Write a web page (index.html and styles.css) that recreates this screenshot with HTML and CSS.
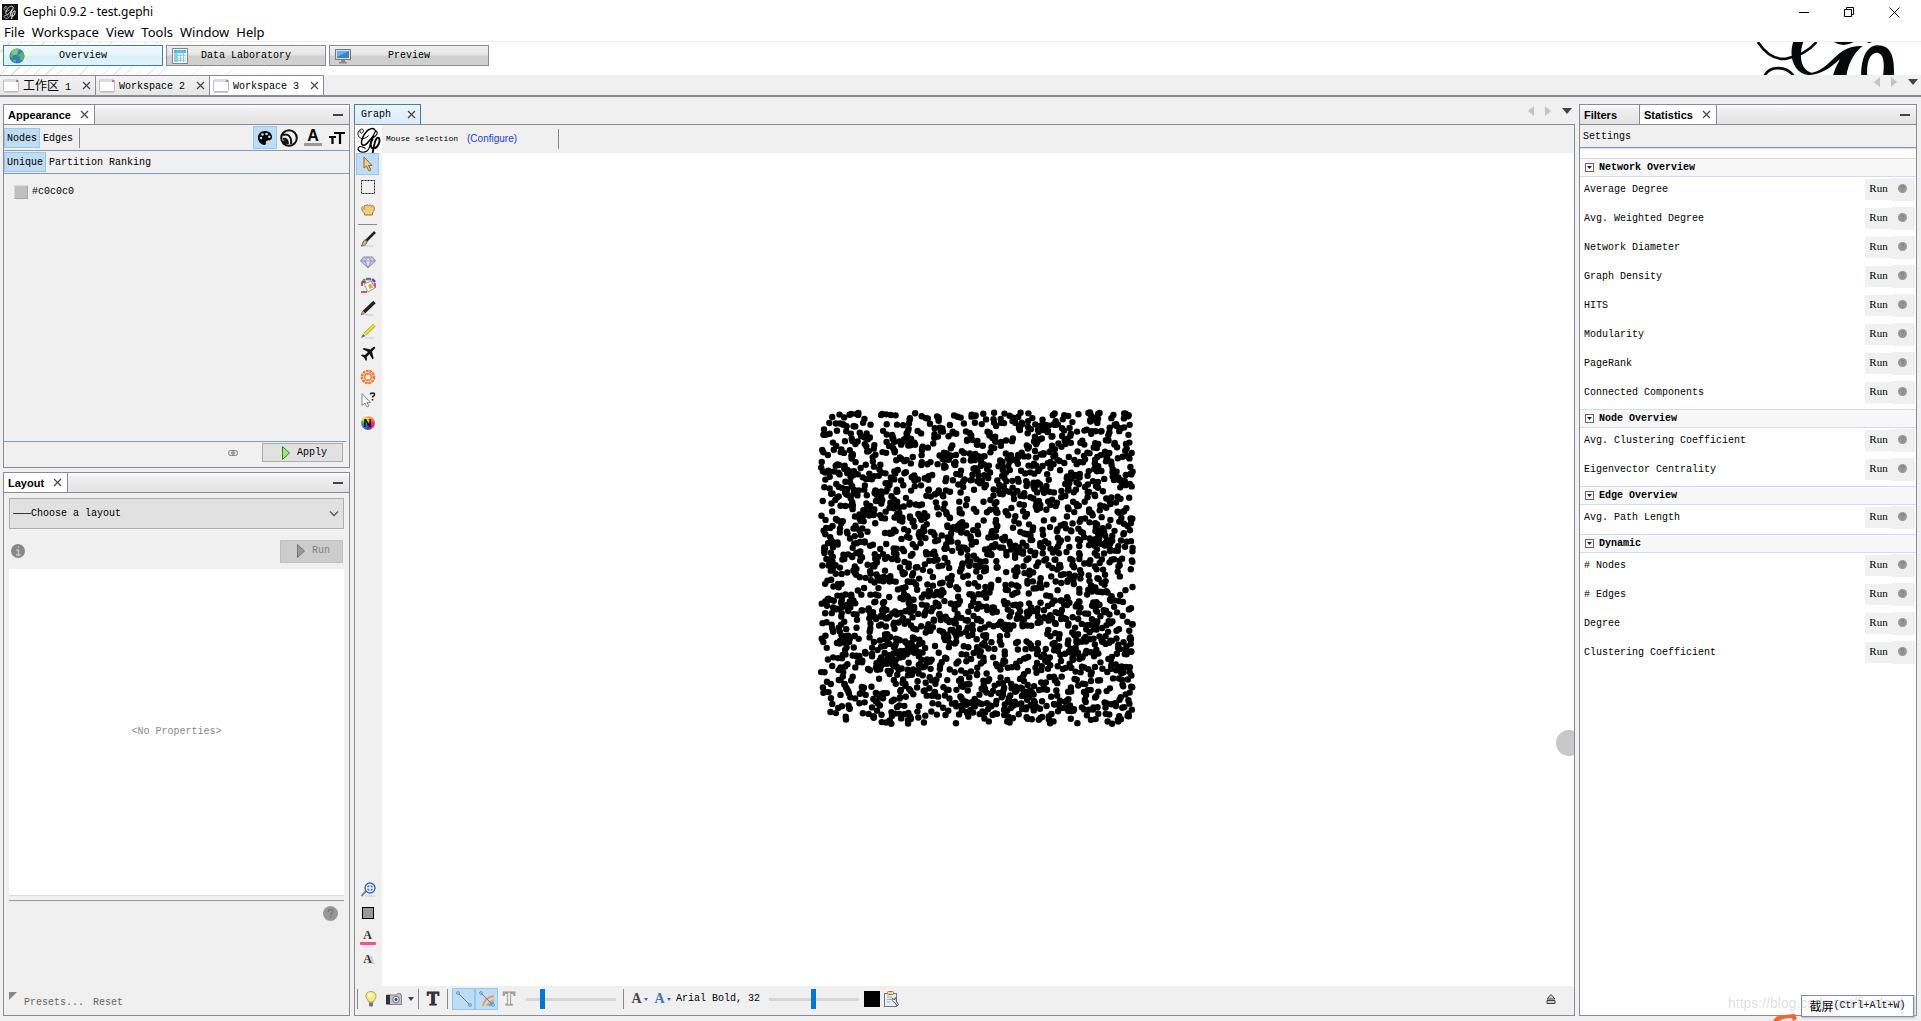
FILE: index.html
```html
<!DOCTYPE html>
<html lang="en">
<head>
<meta charset="utf-8">
<title>Gephi 0.9.2 - test.gephi</title>
<link rel="stylesheet" href="styles.css">
</head>
<body>
<svg class="defs" aria-hidden="true">
  <symbol id="close" viewBox="0 0 9 9"><path d="M1 1l7 7M8 1L1 8" stroke="#444" stroke-width="1.2" fill="none"/></symbol>
  <symbol id="help" viewBox="0 0 14 14"><circle cx="7" cy="7" r="7" fill="#989898"/><path d="M4.8 5.4C4.8 2.6 9.2 2.6 9.2 5.2 9.2 6.8 7 6.8 7 8.6M7 9.8v1.4" fill="none" stroke="#777" stroke-width="1.3"/></symbol>
  <symbol id="info" viewBox="0 0 14 14"><circle cx="7" cy="7" r="7" fill="#888"/><path d="M5.5 6H7.5V11M5 11H9.5M6.8 3h1" fill="none" stroke="#ccc" stroke-width="1.4"/></symbol>
  <symbol id="fold" viewBox="0 0 9 9"><rect x=".5" y=".5" width="8" height="8" fill="#fff" stroke="#666"/><path d="M2 3h5L4.500 6z" fill="#222"/></symbol>
  <symbol id="sheet" viewBox="0 0 16 14"><rect x=".5" y="1" width="15" height="11.500" rx="1" fill="#fdfdfd" stroke="#bbb"/><path d="M1 2h14" stroke="#ddd" stroke-width="2"/><path d="M13 1h2v2h-2z" fill="#c77"/><path d="M1 13.500h14" stroke="#ccc"/></symbol>
  <symbol id="script-g" viewBox="0 0 26 26"><g fill="none" stroke="currentColor" stroke-linecap="round"><path d="M12 9C6 15 1 10 2 6 3 2 8 1 7 5 6 8 3 6 4 4" stroke-width=".9"/><path d="M18 3C15 0 9 4 6 12 4 18 7 20 11 16L17 9" stroke-width="1.500"/><path d="M19 4C16 9 14 15 13 20 11 26 4 26 2 22 2 18 6 19 9 21" stroke-width="1.100"/><path d="M19 4c3 2 1 5-3 7" stroke-width="1"/><path d="M16 12c-3 5-2 9 1 9 4 0 7-7 5-10-3-2-5 8-6 15" stroke-width="1.800"/></g></symbol>
  <symbol id="left" viewBox="0 0 6 10"><path d="M6 0v10L0 5z" fill="#c4c4c4"/></symbol>
  <symbol id="right" viewBox="0 0 6 10"><path d="M0 0v10L6 5z" fill="#c4c4c4"/></symbol>
  <symbol id="down" viewBox="0 0 10 6"><path d="M0 0h10L5 6z" fill="#444"/></symbol>
</svg>

<header class="titlebar">
  <svg class="app-icon" viewBox="0 0 16 16"><rect width="16" height="16" fill="#111"/><svg x="1" y="1" width="14" height="14" color="#fff"><use href="#script-g"/></svg></svg>
  <h1>Gephi 0.9.2 - test.gephi</h1>
  <div class="window-buttons">
    <button aria-label="Minimize"><svg width="11" height="11"><path d="M0 5.500h10" stroke="#000"/></svg></button>
    <button aria-label="Restore"><svg width="11" height="11" fill="none" stroke="#000"><path d="M.5 2.500h7v7h-7zM2.500 2.500v-2h7v7h-2"/></svg></button>
    <button aria-label="Close"><svg width="11" height="11"><path d="M.5.500l10 10M10.500.500l-10 10" stroke="#000"/></svg></button>
  </div>
</header>
<nav class="menubar"><button>File</button><button>Workspace</button><button>View</button><button>Tools</button><button>Window</button><button>Help</button></nav>

<div class="perspectives">
  <button class="perspective active">
    <svg width="16" height="16" viewBox="0 0 16 16"><circle cx="8" cy="8" r="7.500" fill="#2b7fc4"/><path d="M2 4C4 0 10 0 11 2L9 4 8 7 5 7 3 10 1 8zM10 6l4-2 1.500 4-2 5-2-1-.5-3-2-1zM4 11l3 1 0 3-3-2z" fill="#63b45a"/><circle cx="6" cy="4" r="3" fill="#fff" opacity=".25"/></svg><span>Overview</span></button>
  <button class="perspective">
    <svg width="16" height="16" viewBox="0 0 16 16"><rect x=".5" y=".5" width="15" height="15" fill="#fff" stroke="#888"/><path d="M2 2h12v3H2z" fill="#50bfe2"/><path d="M2 5h3v9H2z" fill="#8ad6ec"/><path d="M2 7.500h12M2 10h12M2 12.500h12M5.500 3v11M8.500 3v11M11.500 3v11" stroke="#7cc6e2" stroke-width=".8"/></svg><span>Data Laboratory</span></button>
  <button class="perspective">
    <svg width="16" height="16" viewBox="0 0 16 16"><rect x=".5" y="1.500" width="15" height="10" fill="#ddd" stroke="#777"/><path d="M2 3h12v7H2z" fill="#2d87cb"/><path d="M2 3h12L2 9z" fill="#66b1e5"/><path d="M6 12h4v2h2v1.500H4V14h2z" fill="#888"/></svg><span>Preview</span></button>
  <svg class="banner" viewBox="760 126 440 99" aria-hidden="true"><g fill="#050909"><path d="M774 126C800 165 830 180 860 176 900 168 930 150 950 126M795 226C810 196 860 198 880 226" fill="none" stroke="#050909" stroke-width="8"/><path d="M880 126H910C895 170 905 212 935 218 975 212 1000 170 1030 152 1050 140 1070 137 1088 138 1060 160 1045 195 1040 225H1000C1005 205 1015 190 1020 178 990 205 960 226 925 225 885 220 865 175 880 126zM1084 225C1085 150 1115 136 1135 136 1170 136 1185 165 1182 225H1150C1155 180 1150 160 1130 158 1112 160 1100 180 1102 225zM1002 126Q1030 144 1062 126zM1100 126h16l-8 4z"/></g></svg>
</div>

<div class="workspaces">
  <div class="workspace"><svg width="16" height="14"><use href="#sheet"/></svg><span><span class="cjk">工作区</span> 1</span><button aria-label="Close workspace"><svg><use href="#close"/></svg></button></div>
  <div class="workspace"><svg width="16" height="14"><use href="#sheet"/></svg><span>Workspace 2</span><button aria-label="Close workspace"><svg><use href="#close"/></svg></button></div>
  <div class="workspace active"><svg width="16" height="14"><use href="#sheet"/></svg><span>Workspace 3</span><button aria-label="Close workspace"><svg><use href="#close"/></svg></button></div>
  <div class="scrollers"><button aria-label="Previous"><svg width="6" height="10"><use href="#left"/></svg></button><button aria-label="Next"><svg width="6" height="10"><use href="#right"/></svg></button><button aria-label="List"><svg width="10" height="6"><use href="#down"/></svg></button></div>
</div>

<main>
  <div class="sidebar">
    <section class="panel appearance">
      <div class="tabs"><div class="tab active"><h2>Appearance</h2><button aria-label="Close"><svg><use href="#close"/></svg></button></div><button class="minimize" aria-label="Minimize"></button></div>
      <div class="bar elements">
        <button class="toggle on">Nodes</button><button class="toggle">Edges</button><i class="vsep"></i>
        <div class="aspects">
          <button class="aspect on" aria-label="Color"><svg width="16" height="16" viewBox="0 0 16 16"><path d="M8 1C3 1 1 4.500 1 7.500 1 12 4 14.500 7.500 15 10 15 8 12 9.500 11 11 10 15 11 15 7 15 3 11.500 1 8 1z" fill="#000"/><g fill="#bfdcf3"><circle cx="4" cy="8" r="1.300"/><circle cx="5.500" cy="4.500" r="1.300"/><circle cx="9.500" cy="4" r="1.300"/><circle cx="12.300" cy="6.800" r="1.300"/></g></svg></button>
          <button class="aspect" aria-label="Size"><svg width="18" height="18" viewBox="0 0 18 18" fill="none" stroke="#111" stroke-width="2"><circle cx="9" cy="9" r="7.800"/><path d="M3 6c5-2 9 2 8 9M3 10c3-1 5 1 5 5"/><circle cx="5" cy="13.500" r="1.500" fill="#111"/></svg></button>
          <button class="aspect letter" aria-label="Label color">A</button>
          <button class="aspect" aria-label="Label size"><svg width="16" height="14" viewBox="0 0 16 14"><path d="M5 2h11M11 2v11M0 6h7M3.500 6v7" stroke="#000" stroke-width="2.200" fill="none"/></svg></button>
        </div>
      </div>
      <div class="bar modes"><button class="toggle on">Unique</button><button class="toggle">Partition</button><button class="toggle">Ranking</button></div>
      <label class="color"><button class="swatch" aria-label="Pick color"></button>#c0c0c0</label>
      <div class="bar apply-row">
        <button class="link" aria-label="Link"><svg width="10" height="6" viewBox="0 0 10 6"><rect x=".5" y=".5" width="9" height="5" rx="2" fill="#ddd" stroke="#888"/><path d="M3 3h4M5 1v1M5 4v1" stroke="#666"/></svg></button>
        <button class="push"><svg width="8" height="14" viewBox="0 0 8 14"><path d="M.5.500v13L7.500 7z" fill="#a9e082" stroke="#218a10"/></svg>Apply</button>
      </div>
    </section>

    <section class="panel layout">
      <div class="tabs"><div class="tab active"><h2>Layout</h2><button aria-label="Close"><svg><use href="#close"/></svg></button></div><button class="minimize" aria-label="Minimize"></button></div>
      <div class="layout-body">
        <div class="choice"><select aria-label="Layout"><option>———Choose a layout</option></select><svg width="10" height="6"><path d="M1 .5l4 4 4-4" fill="none" stroke="#555" stroke-width="1.300"/></svg></div>
        <div class="run-row"><svg width="14" height="14"><use href="#info"/></svg><button class="push" disabled><svg width="8" height="14" viewBox="0 0 8 14"><path d="M.5.500v13L7.500 7z" fill="#999" stroke="#777"/></svg>Run</button></div>
        <div class="properties">&lt;No Properties&gt;</div>
        <div class="description"><svg width="15" height="15"><use href="#help"/></svg></div>
        <div class="presets"><svg width="8" height="8"><path d="M0 0h8L0 8z" fill="#888"/></svg><button>Presets...</button><button>Reset</button></div>
      </div>
    </section>
  </div>

  <section class="graph">
    <div class="graph-tabs">
      <div class="tab"><h2>Graph</h2><button aria-label="Close"><svg><use href="#close"/></svg></button></div>
      <div class="scrollers"><button aria-label="Previous"><svg width="6" height="10"><use href="#left"/></svg></button><button aria-label="Next"><svg width="6" height="10"><use href="#right"/></svg></button><button aria-label="List"><svg width="10" height="6"><use href="#down"/></svg></button></div>
    </div>
    <div class="graph-body">
      <div class="selection"><svg class="mark" width="27" height="28" viewBox="-1 -1 28 28"><use href="#script-g"/></svg><span>Mouse selection</span><a href="#">(Configure)</a><i class="vsep"></i></div>
      <div class="canvas-row">
        <div class="tools">
          <button class="on" aria-label="Select"><svg viewBox="0 0 16 16"><path d="M4 1v11l2.500-2L9 15l2-1-2.500-4.500H12z" fill="#f2cd85" stroke="#8c6a35"/></svg></button>
          <button aria-label="Rectangle selection"><svg viewBox="0 0 16 16"><rect x="1.500" y="1.500" width="13" height="13" fill="none" stroke="#111" stroke-dasharray="2 1"/></svg></button>
          <button aria-label="Drag"><svg viewBox="0 0 16 16"><path d="M2.500 4.500C1 6 1.500 9 4.500 11v2h8v-2C14.500 9 14.500 6 14 4.500c-.6-1-2-1-2.500 0C11.500 3 9.500 2.500 9 3.800 8.500 2.500 6.500 2.500 6.300 4 5.500 3 4 3 4 5v2.500" fill="#edcf7a" stroke="#9a7939"/></svg></button>
          <hr>
          <button aria-label="Brush"><svg viewBox="0 0 16 16"><path d="M5 15h9" stroke="#ccc"/><path d="M15 1L6 10" stroke="#222" stroke-width="2.600"/><path d="M7 10l-2-1c-2 0-2 4-4 6 3 0 6-1 6-5z" fill="#c9ad7c" stroke="#765"/></svg></button>
          <button aria-label="Sizer"><svg viewBox="0 0 16 16"><path d="M3.500 3h9L15.500 7 8 14 .5 7z" fill="#c5c8e4" stroke="#8b8fa8"/><path d="M.5 7h15M5 7l3 7 3-7-3-4z" fill="#dcdff2" stroke="#8a8eaa" stroke-width=".8"/></svg></button>
          <button aria-label="Painter"><svg viewBox="0 0 16 16"><g stroke-width="2.500" fill="none"><path d="M2 6L5 2" stroke="#3a7"/><path d="M6 2h5" stroke="#678"/><path d="M12 2l3 3" stroke="#74c"/><path d="M15 6v5" stroke="#d4b"/></g><path d="M2 5h4M2 5v4M1 15h6" fill="none" stroke="#c22" stroke-width="1.500"/><path d="M4 7l7-3 4 7-7 4z" fill="#faf8f0" stroke="#999"/><path d="M8 8l3-1.500 2 4-3 1.500z" fill="#eda92c"/></svg></button>
          <button aria-label="Node pencil"><svg viewBox="0 0 16 16"><path d="M5 15h9" stroke="#ccc"/><path d="M14.500 2L4 12" stroke="#222" stroke-width="3.600"/><path d="M1 15l1.500-4 2.500 2.500z" fill="#d4ad72" stroke="#654" stroke-width=".6"/></svg></button>
          <button aria-label="Edge pencil"><svg viewBox="0 0 16 16"><path d="M5 15h9" stroke="#ccc"/><path d="M14.500 2L5 11" stroke="#aaa31a" stroke-width="3.600"/><path d="M14.500 2L5 11" stroke="#eee72e" stroke-width="2"/><path d="M1 15l2-4 2.500 2z" fill="#666"/></svg></button>
          <button aria-label="Shortest path"><svg viewBox="0 0 16 16"><path d="M15 1c-1-1-3 1-4.500 2.500L4 2 2.500 3 8 6 5 9 2 8.500 1 9.500l3 2 2 3.500 1-1-.3-3L9.500 8l3 5.500 1.200-1.300L12 5.500C13.500 4 16 2 15 1z" fill="#111"/></svg></button>
          <button aria-label="Heat map"><svg viewBox="0 0 16 16"><g fill="none" stroke="#f37a2b"><circle cx="8" cy="8" r="6" stroke-width="2.600" stroke-dasharray="2.500 .7"/><circle cx="8" cy="8" r="3.300" stroke-width="1.400"/></g></svg></button>
          <button aria-label="Edit"><svg viewBox="0 0 16 16"><path d="M2 1.500v12l3-2.500 2 4 2-1-2-3.500h3.500z" fill="#fff" stroke="#888"/><path d="M10.500 2.500c0-2 4-2 4 0 0 1.500-2 1.500-2 3M12.500 7v1.500" fill="none" stroke="#222" stroke-width="1.600"/></svg></button>
          <button aria-label="Neighbours"><i class="wheel"><b>N</b></i></button>
          <div class="tools-bottom">
            <button aria-label="Center on graph"><svg viewBox="0 0 16 16"><path d="M5 14h10" stroke="#ccc"/><path d="M6 9L1.500 14" stroke="#888" stroke-width="2"/><circle cx="10" cy="6" r="5" fill="#eef4ff" stroke="#3d62c4" stroke-width="1.400"/><path d="M8 5.500V4h1.500M10.500 4H12v1.500M12 6.500V8h-1.500M9.500 8H8V6.500" fill="none" stroke="#2450bd"/></svg></button>
            <button aria-label="Reset colors"><svg viewBox="0 0 16 16"><rect x="2.500" y="2.500" width="11" height="11" fill="#999" stroke="#000"/></svg></button>
            <button class="serif-a pink" aria-label="Reset label colors">A</button>
            <button class="serif-a shade" aria-label="Reset label visibility">A</button>
          </div>
        </div>
        <div class="viewport"><canvas id="nodes" width="320" height="320"></canvas><i class="disc"></i></div>
      </div>
      <div class="bottom-bar">
        <i class="vsep"></i>
        <button class="bulb" aria-label="Background"><svg viewBox="0 0 16 16"><path d="M8 .5C4.500.500 2.500 3 3 6c.4 2 2.500 3 2.500 5h5C10.500 9 13 8 13 5.500 13 2.500 11 .5 8 .5z" fill="#f7ec83" stroke="#b5a23c"/><path d="M6 11.500h4v3l-1 1H7l-1-1z" fill="#777"/><circle cx="7" cy="4" r="2" fill="#fff" opacity=".7"/></svg></button>
        <button class="camera" aria-label="Screenshot"><svg viewBox="0 0 16 16"><path d="M.5 4h10l1-1.500h3V4h1v9.500H.5z" fill="#c4c4c9" stroke="#85858b"/><path d="M0 4h4v9H0z" fill="#333"/><circle cx="10" cy="8.500" r="3.300" fill="#e8ecf4" stroke="#68728a"/><circle cx="10" cy="8.500" r="1.600" fill="#2c4c86"/></svg></button>
        <button class="drop" aria-label="Screenshot options"><svg width="6" height="4"><path d="M0 0h6L3 4z" fill="#345"/></svg></button>
        <i class="vsep"></i>
        <button class="big-t" aria-label="Show node labels">T</button>
        <i class="vsep"></i>
        <div class="pair"><button class="on" aria-label="Show edges"><svg viewBox="0 0 16 16"><path d="M2 2l12 12" stroke="#4d84b8"/><circle cx="2" cy="2" r="1.300" fill="#fff" stroke="#4d84b8"/><circle cx="14" cy="14" r="1.300" fill="#fff" stroke="#4d84b8"/></svg></button><button class="on" aria-label="Edge color"><svg viewBox="0 0 16 16"><g fill="none" stroke-width="2"><path d="M4 15C5 9 9 6 15 5" stroke="#ee8e8e"/><path d="M6 15c1-4 4-7 9-8" stroke="#efd77a"/><path d="M8 15c1-3 4-5 7-6" stroke="#8fcf9c"/><path d="M10 15c1-2 3-3 5-4" stroke="#a18fd8"/></g><path d="M2 2l12 12" stroke="#4d84b8"/><circle cx="2" cy="2" r="1.300" fill="#fff" stroke="#4d84b8"/><circle cx="14" cy="14" r="1.300" fill="#fff" stroke="#4d84b8"/></svg></button></div>
        <button class="big-t hollow" aria-label="Show edge labels">T</button>
        <input class="weight" type="range" min="0" max="100" value="17" aria-label="Edge weight scale">
        <i class="vsep"></i>
        <button class="font-a" aria-label="Label size mode">A<svg width="4" height="3"><path d="M0 0h4L2 3z" fill="#36c"/></svg></button>
        <button class="font-a blue" aria-label="Label color mode">A<svg width="4" height="3"><path d="M0 0h4L2 3z" fill="#36c"/></svg></button>
        <button class="font-name">Arial Bold, 32</button>
        <input type="range" min="0" max="100" value="49" aria-label="Font size scale">
        <button class="black" aria-label="Default label color"></button>
        <button class="clip" aria-label="Label attributes"><svg viewBox="0 0 16 16"><rect x="1.500" y="2.500" width="12" height="13" fill="#e6edf5" stroke="#68788e"/><rect x="4.500" y=".5" width="6" height="3" rx="1" fill="#f3d796" stroke="#a57a26"/><path d="M4 6h5M4 8.500h4M4 11h3" stroke="#9ab"/><path d="M9.500 7c-1 2 0 4 2 4l2.500 4 1.500-1.500L13 10c1-1.500 0-3-1-3.500v2h-1.500z" fill="#fff" stroke="#556"/></svg></button>
        <button class="expand" aria-label="Expand"><svg width="10" height="10" viewBox="0 0 10 10"><path d="M5 .5L9 5H1zM1 6.500h8v3H1z" fill="#ccc" stroke="#444"/></svg></button>
      </div>
    </div>
  </section>

  <section class="panel statistics">
    <div class="tabs"><div class="tab filters"><h2>Filters</h2></div><div class="tab active"><h2>Statistics</h2><button aria-label="Close"><svg><use href="#close"/></svg></button></div><button class="minimize" aria-label="Minimize"></button></div>
    <div class="settings"><button>Settings</button></div>
    <div class="metrics">
      <h3><svg><use href="#fold"/></svg>Network Overview</h3>
      <ul>
        <li><span>Average Degree</span><button>Run</button><button class="q" aria-label="Report"><svg><use href="#help"/></svg></button></li>
        <li><span>Avg. Weighted Degree</span><button>Run</button><button class="q" aria-label="Report"><svg><use href="#help"/></svg></button></li>
        <li><span>Network Diameter</span><button>Run</button><button class="q" aria-label="Report"><svg><use href="#help"/></svg></button></li>
        <li><span>Graph Density</span><button>Run</button><button class="q" aria-label="Report"><svg><use href="#help"/></svg></button></li>
        <li><span>HITS</span><button>Run</button><button class="q" aria-label="Report"><svg><use href="#help"/></svg></button></li>
        <li><span>Modularity</span><button>Run</button><button class="q" aria-label="Report"><svg><use href="#help"/></svg></button></li>
        <li><span>PageRank</span><button>Run</button><button class="q" aria-label="Report"><svg><use href="#help"/></svg></button></li>
        <li><span>Connected Components</span><button>Run</button><button class="q" aria-label="Report"><svg><use href="#help"/></svg></button></li>
      </ul>
      <h3><svg><use href="#fold"/></svg>Node Overview</h3>
      <ul>
        <li><span>Avg. Clustering Coefficient</span><button>Run</button><button class="q" aria-label="Report"><svg><use href="#help"/></svg></button></li>
        <li><span>Eigenvector Centrality</span><button>Run</button><button class="q" aria-label="Report"><svg><use href="#help"/></svg></button></li>
      </ul>
      <h3><svg><use href="#fold"/></svg>Edge Overview</h3>
      <ul>
        <li><span>Avg. Path Length</span><button>Run</button><button class="q" aria-label="Report"><svg><use href="#help"/></svg></button></li>
      </ul>
      <h3><svg><use href="#fold"/></svg>Dynamic</h3>
      <ul>
        <li><span># Nodes</span><button>Run</button><button class="q" aria-label="Report"><svg><use href="#help"/></svg></button></li>
        <li><span># Edges</span><button>Run</button><button class="q" aria-label="Report"><svg><use href="#help"/></svg></button></li>
        <li><span>Degree</span><button>Run</button><button class="q" aria-label="Report"><svg><use href="#help"/></svg></button></li>
        <li><span>Clustering Coefficient</span><button>Run</button><button class="q" aria-label="Report"><svg><use href="#help"/></svg></button></li>
      </ul>
    </div>
  </section>
</main>

<svg class="scribble" width="24" height="7" aria-hidden="true"><path d="M0 7C2 4 3 2 6 2 12 1 17 0 22 0l2 5-4 2-1-3c-6 0-10 1-13 3z" fill="#fb6230"/></svg>
<div class="tooltip" role="tooltip"><span class="cjk">截屏</span>(Ctrl+Alt+W)</div>
<div class="watermark">https://blog.csdn.net/finelord</div>
<script src="graph.js"></script>
</body>
</html>
```
FILE: styles.css
```css
:root {
  --face: #f0f0f0;
  --edge: #898c95;
  --rule: #7f9db9;
  --mono: "Liberation Mono", "Noto Sans CJK SC", monospace;
  --sans: "Liberation Sans", sans-serif;
}
* { box-sizing: border-box; }
body { margin: 0; height: 100vh; display: flex; flex-direction: column; background: var(--face); color: #000; font: 10px/14px var(--mono); overflow: hidden; position: relative; }
button { font: inherit; color: inherit; background: none; border: 0; padding: 0; margin: 0; }
h1, h2, h3, ul { margin: 0; padding: 0; list-style: none; font-size: inherit; font-weight: normal; }
svg { display: block; flex: none; }
.defs { position: absolute; width: 0; height: 0; }
.cjk { font: 12px/14px "Noto Sans CJK SC", sans-serif; }
.vsep { width: 1px; height: 20px; background: #898989; flex: none; }

.titlebar { display: flex; align-items: center; height: 24px; background: #fff; padding-left: 2px; }
.app-icon { width: 16px; height: 16px; }
.titlebar h1 { font: 12px/16px "Noto Sans", sans-serif; margin-left: 5px; }
.window-buttons { margin-left: auto; padding-right: 4px; display: flex; height: 20px; }
.window-buttons button { width: 45px; display: flex; justify-content: center; align-items: center; }
.menubar { display: flex; gap: 7px; height: 18px; padding-left: 4px; background: #fff; border-bottom: 1px solid #eee; font: 13px/17px "Noto Sans", sans-serif; }

.perspectives { display: flex; gap: 3px; height: 33px; padding: 3px 21px 0 3px; background: linear-gradient(to right, transparent, #fff 340px), repeating-linear-gradient(135deg, #fff 0 7px, #ddd 7px 8px); }
.perspective { width: 160px; height: 21px; display: flex; align-items: center; padding: 0 5px; border: 1px solid var(--edge); background: linear-gradient(#f0f0f0, #e4e4e4 48%, #cfcfcf 52%, #d0d0d0); }
.perspective.active { border-color: #3c7fb1; background: linear-gradient(#f0f9fd, #e8f5fc 48%, #d9f0fb 52%, #dff2fb); }
.perspective span { flex: 1; text-align: center; padding: 1px 16px 0 0; }
.banner { width: 147px; height: 33px; margin: -3px 0 0 auto; }

.workspaces { display: flex; height: 22px; border-bottom: 2px solid var(--edge); }
.workspace { display: flex; align-items: center; border: 1px solid var(--edge); border-width: 1px 1px 0 0; padding: 0 4px 0 3px; background: linear-gradient(#f3f3f3, #e6e6e6); }
.workspace > span { margin: 2px 11px 0 4px; white-space: pre; }
.workspace.active { background: #fff; }
.workspace button svg, .tab button svg { width: 9px; height: 9px; }
.scrollers { margin-left: auto; display: flex; gap: 11px; align-items: center; }
.workspaces .scrollers { padding: 0 3px 6px 0; }

main { flex: 1; min-height: 0; display: grid; grid-template-columns: 347px 1fr 338px; gap: 4px; padding: 7px 4px 5px 3px; }
.sidebar { display: grid; grid-template-rows: 364px 1fr; gap: 4px; min-height: 0; }
.panel { border: 1px solid var(--edge); display: flex; flex-direction: column; min-height: 0; }
.tabs { display: flex; height: 20px; flex: none; border-bottom: 1px solid var(--edge); background: linear-gradient(#fff, #f0f0f0 20%, #e3e3e3); }
.tab { display: flex; align-items: center; gap: 9px; padding: 0 5px 0 4px; border-right: 1px solid var(--edge); }
.tab.active { background: #fff; }
.tab h2 { font: bold 11px/14px var(--sans); }
.filters { width: 60px; }
.minimize { width: 10px; height: 2px; background: #444; margin: 9px 6px 0 auto; }

.bar { display: flex; align-items: center; }
.elements { height: 26px; border-bottom: 1px solid var(--rule); }
.modes { height: 23px; border-bottom: 1px solid var(--rule); }
.toggle { height: 20px; padding: 2px 2px 0; border: 1px solid transparent; }
.on { background: #bfdcf3; border: 1px solid #90c8f6; }
.elements .vsep { margin-left: 3px; }
.aspects { margin-left: auto; display: flex; }
.aspect { width: 24px; height: 23px; display: flex; align-items: center; justify-content: center; }
.letter { width: 18px; height: 18px; margin: 2px 3px; font: bold 16px/14px var(--sans); border-bottom: 3px solid #999; }
.color { display: flex; align-items: center; gap: 4px; padding: 11px 10px; }
.swatch { width: 14px; height: 14px; background: #c0c0c0; border: 1px solid; border-color: #ddd #aaa #aaa #ddd; }
.apply-row { margin: auto 3px 0 0; height: 26px; border-top: 1px solid var(--rule); justify-content: flex-end; gap: 24px; padding: 0 3px 4px 0; }
.push { display: flex; align-items: center; justify-content: center; gap: 7px; width: 81px; height: 19px; border: 1px solid #adadad; background: #e1e1e1; padding-left: 4px; }

.layout-body { flex: 1; display: flex; flex-direction: column; padding: 5px 5px 4px; min-height: 0; }
.choice { display: flex; align-items: center; position: relative; }
.choice select { appearance: none; width: 100%; height: 31px; border: 1px solid #adadad; border-radius: 0; background: #e1e1e1; font: inherit; color: #000; padding: 0 3px; }
.choice svg { position: absolute; right: 5px; }
.run-row { display: flex; justify-content: space-between; align-items: center; height: 40px; padding: 4px 1px 0 2px; }
.run-row .push { width: 63px; height: 23px; background: #ccc; border-color: #bfbfbf; color: #838383; }
.properties { flex: 1; background: #fff; display: flex; align-items: center; justify-content: center; color: #888; border-bottom: 1px solid #ddd; }
.description { height: 92px; margin-top: 4px; border-top: 1px solid #999; padding: 5px 6px; display: flex; justify-content: flex-end; }
.presets { display: flex; gap: 9px; height: 19px; color: #666; }
.presets svg { margin-right: -2px; }
.presets button { padding-top: 2px; }

.graph { display: flex; flex-direction: column; min-width: 0; min-height: 0; }
.graph-tabs { display: flex; height: 20px; flex: none; }
.graph-tabs .tab { width: 67px; justify-content: space-between; border: 1px solid #3c7fb1; border-bottom: 0; background: linear-gradient(#eaf5fd, #d8ebfb); padding: 0 4px 0 6px; }
.graph-tabs h2 { font: 10px/14px var(--mono); padding-top: 1px; }
.graph-tabs .scrollers { padding: 0 3px 6px 0; }
.graph-body { flex: 1; display: flex; flex-direction: column; border: 1px solid var(--edge); min-height: 0; }
.selection { display: flex; height: 28px; align-items: center; font-size: 8px; }
.mark { background: #fff; }
.selection span { margin-left: 4px; }
.selection a { margin-left: 9px; font: 10px/14px var(--sans); color: #1c39f0; text-decoration: none; }
.selection .vsep { margin-left: 41px; }
.canvas-row { flex: 1; display: flex; min-height: 0; }
.tools { width: 27px; flex: none; display: flex; flex-direction: column; gap: 1px; padding: 0 2px 16px 1px; }
.tools button { width: 23px; height: 22px; flex: none; display: flex; align-items: center; justify-content: center; }
.tools svg, .bottom-bar button > svg[viewBox="0 0 16 16"] { width: 16px; height: 16px; }
.tools hr { width: 19px; height: 1px; border: 0; background: #888; margin: 2px; }
.tools-bottom { margin-top: auto; display: flex; flex-direction: column; gap: 1px; }
.wheel { width: 14px; height: 14px; border-radius: 50%; background: conic-gradient(#fb3, #f83, #f33, #c2a, #43d, #28d, #2b5, #fd2, #fb3); box-shadow: 0 0 0 1px #fff; display: grid; place-items: center; }
.wheel b { font: bold 11px/14px var(--sans); }
.serif-a { font: bold 12px/12px "Liberation Serif", serif; color: #333; }
.tools .pink { flex-direction: column; gap: 1px; padding-top: 2px; }
.pink::after { content: ""; width: 16px; height: 3px; background: #ff4f82; border-radius: 1px; }
.shade { text-shadow: 3px 1px #ccc; }
.viewport { flex: 1; background: #fff; display: flex; align-items: center; justify-content: center; position: relative; overflow: hidden; }
.viewport canvas { margin: 0 2px 3px 0; }
.disc { position: absolute; right: -8px; top: 577px; width: 26px; height: 26px; border-radius: 50%; background: #c8c8c8; }
.bottom-bar { display: flex; align-items: center; height: 29px; flex: none; padding: 0 15px 3px 2px; }
.bottom-bar button { display: flex; align-items: center; justify-content: center; height: 22px; flex: none; width: 28px; }
.bottom-bar .bulb { width: 26px; }
.bottom-bar .camera { width: 20px; }
.bottom-bar .drop { width: 14px; }
.bottom-bar .big-t { font: bold 18px/20px "Liberation Serif", serif; color: #333; -webkit-text-stroke: 1px #333; }
.bottom-bar .hollow { color: #fff; -webkit-text-stroke: 1px #999; padding-right: 6px; }
.pair { display: flex; margin-left: 4px; }
.bottom-bar .pair button { width: 23px; }
.bottom-bar input { appearance: none; width: 90px; height: 20px; margin: 0 5px 0 0; background: linear-gradient(#d6d6d6, #d6d6d6) center / 100% 3px no-repeat; }
.bottom-bar .weight { margin-right: 7px; }
.bottom-bar input::-webkit-slider-thumb { appearance: none; width: 5px; height: 20px; background: #0078d7; border: 0; }
.bottom-bar .font-a { width: 23px; gap: 2px; font: bold 14px/16px "Liberation Serif", serif; color: #444; }
.bottom-bar .vsep + .font-a { margin-left: 4px; }
.bottom-bar .blue { color: #4a6cc8; }
.bottom-bar .font-name { width: 95px; padding-right: 7px; }
.bottom-bar .black { width: 16px; height: 16px; background: #000; margin-right: 3px; }
.bottom-bar .clip, .bottom-bar .expand { width: 16px; }
.bottom-bar .expand { margin-left: auto; }

.statistics { background: #fff; }
.settings { height: 23px; background: var(--face); border-bottom: 1px solid var(--rule); display: flex; align-items: center; padding: 2px 0 0 3px; }
.metrics { border-top: 1px solid #d6dff5; padding-top: 9px; }
.metrics h3 { display: flex; align-items: center; gap: 5px; height: 19px; padding-left: 5px; background: #f7f7f7; border: 1px solid #d3dcf5; border-width: 1px 0; font-weight: bold; }
.metrics h3 svg { width: 9px; height: 9px; }
.metrics li { display: flex; height: 29px; padding: 1px 1px 0 4px; align-items: flex-start; }
.metrics li span { flex: 1; line-height: 24px; }
.metrics li button { width: 27px; height: 21px; margin-top: 1px; padding-bottom: 2px; background: var(--face); font: 11px/19px "Liberation Serif", serif; }
.metrics li .q { width: 23px; height: 23px; margin: 0; display: flex; justify-content: center; padding: 6px 3px 0 0; }
.q svg { width: 9px; height: 9px; }

.tooltip { position: absolute; right: 7px; bottom: 4px; width: 113px; height: 22px; border: 1px solid var(--edge); background: #fbfcff; display: flex; align-items: center; justify-content: center; box-shadow: 1px 1px 2px #bbb; }
.watermark { position: absolute; right: 9px; bottom: 9px; width: 184px; white-space: nowrap; font: 14px/18px var(--sans); color: rgba(160, 160, 160, .35); }
.scribble { position: absolute; right: 124px; bottom: 0; }
```
FILE: graph.js
```javascript
// Scatters the unlaid-out nodes uniformly over a square.
var canvas = document.getElementById('nodes');
var ctx = canvas.getContext('2d');
var state = 20179;
function random() {
  state = (state * 16807) % 2147483647;
  return state / 2147483647;
}
ctx.fillStyle = '#000';
for (var i = 0; i < 2500; i++) {
  ctx.beginPath();
  ctx.arc(4 + random() * 312, 4 + random() * 312, 3.2, 0, Math.PI * 2);
  ctx.fill();
}
```
